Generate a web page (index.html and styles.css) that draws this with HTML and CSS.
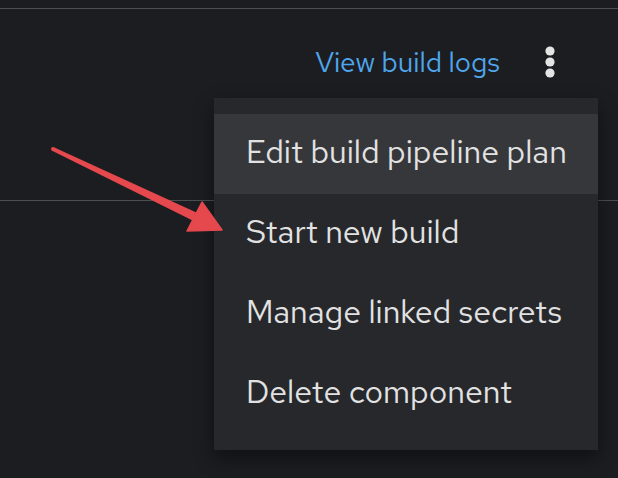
FILE: index.html
```html
<!DOCTYPE html>
<html lang="en">
<head>
<meta charset="utf-8">
<title>Build actions</title>
<link rel="stylesheet" href="styles.css">
</head>
<body>
<div class="page">
  <div class="topbar"></div>
  <div class="toolbar">
    <a class="link" href="#">View build logs</a>
    <button class="kebab" aria-label="Actions">
      <svg width="12" height="34" viewBox="0 0 12 34">
        <circle cx="6" cy="6" r="4.6" fill="#e4e4e4"/>
        <circle cx="6" cy="17" r="4.6" fill="#e4e4e4"/>
        <circle cx="6" cy="28" r="4.6" fill="#e4e4e4"/>
      </svg>
    </button>
  </div>
  <ul class="menu">
    <li class="item active">Edit build pipeline plan</li>
    <li class="item">Start new build</li>
    <li class="item">Manage linked secrets</li>
    <li class="item">Delete component</li>
  </ul>
  <svg class="arrow" width="618" height="478" viewBox="0 0 618 478">
    <polygon points="52.1,150.8 53.9,147.2 196.4,212.4 192.6,220.6" fill="#e5484d"/>
    <circle cx="53" cy="149" r="2" fill="#e5484d"/>
    <polygon points="187,231 202,202 222,230" fill="#e5484d" stroke="#e5484d" stroke-width="1.5" stroke-linejoin="round"/>
  </svg>
</div>
</body>
</html>
```
FILE: styles.css
```css
html, body {
  margin: 0;
  padding: 0;
  background: #1b1d21;
}
body {
  font-family: "Red Hat Text", "Open Sans", "Noto Sans", sans-serif;
  color: #e0e0e0;
}
.page {
  position: relative;
  width: 618px;
  height: 478px;
  overflow: hidden;
}
.topbar {
  height: 8px;
  border-bottom: 1px solid #4d4e52;
}
.toolbar {
  height: 192px;
  border-bottom: 1px solid #4d4e52;
  display: flex;
  justify-content: flex-end;
  align-items: flex-start;
  gap: 30px;
  padding: 33px 48px 0 0;
  box-sizing: border-box;
}
.link {
  color: #4fa6ec;
  text-decoration: none;
  font-size: 28px;
  line-height: 40px;
}
.kebab {
  width: 40px;
  height: 40px;
  padding: 0;
  margin: 0;
  border: 0;
  background: transparent;
  display: flex;
  align-items: center;
  justify-content: center;
}
.menu {
  position: absolute;
  left: 214px;
  top: 98px;
  width: 384px;
  margin: 0;
  padding: 16px 0;
  list-style: none;
  background: #26282c;
  box-shadow: 0 8px 18px rgba(0, 0, 0, 0.45);
}
.item {
  height: 80px;
  box-sizing: border-box;
  display: flex;
  align-items: center;
  padding: 0 0 5px 32px;
  font-size: 32px;
  color: #e2e2e2;
}
.item.active {
  background: #36373b;
}
.arrow {
  position: absolute;
  left: 0;
  top: 0;
  pointer-events: none;
}
```
